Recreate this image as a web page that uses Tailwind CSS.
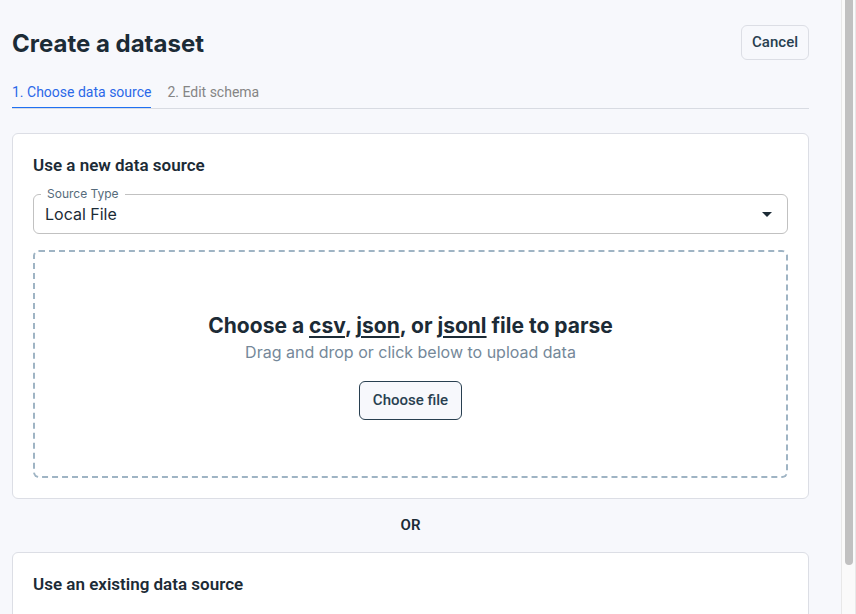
<!DOCTYPE html>
<html lang="en">
<head>
<meta charset="utf-8">
<meta name="viewport" content="width=device-width, initial-scale=1">
<title>Create a dataset</title>
<script src="https://cdn.jsdelivr.net/npm/@tailwindcss/browser@4"></script>
</head>
<body class="flex h-screen overflow-hidden bg-[#f7f8fc] font-[Roboto,'Liberation_Sans',sans-serif] text-[#1c2b36]">
  <main class="min-w-0 flex-1 overflow-hidden pt-[25px] pr-8 pl-3">
    <header class="flex items-start justify-between">
      <h1 class="pt-px font-[family-name:Inter,sans-serif] text-2xl leading-9 font-bold">Create a dataset</h1>
      <button type="button" class="h-[35px] rounded-md border border-[#dcdee5] px-2.5 pb-0.5 text-[15px] leading-5 font-medium text-[#283f50]">Cancel</button>
    </header>
    <nav class="mt-3.5 flex gap-4 border-b border-[#d8dbe2] text-sm leading-5">
      <a href="#source" aria-current="step" class="border-b border-[#1f70f2] pt-1.5 pb-[5px] text-[#2b68e8]">1. Choose data source</a>
      <a href="#schema" class="pt-1.5 pb-[5px] text-[#858585]">2. Edit schema</a>
    </nav>

    <section id="source" class="mt-6 rounded-md border border-[#dcdee5] bg-white p-5">
      <h2 class="text-[17px] leading-[22px] font-semibold">Use a new data source</h2>
      <div class="relative mt-[18px]">
        <label for="type" class="absolute -top-2 left-2 bg-white px-1.5 font-[family-name:Inter,sans-serif] text-xs leading-4 text-[#566b7b]">Source Type</label>
        <select id="type" class="block h-10 w-full appearance-none rounded-md border border-[#c1c1c1] bg-white px-[11px] font-[family-name:Inter,sans-serif] text-base">
          <option>Local File</option>
        </select>
        <svg class="pointer-events-none absolute top-2 right-[9px] size-6" viewBox="0 0 24 24" fill="#1c2b36" aria-hidden="true"><path d="M7 10l5 5 5-5z"/></svg>
      </div>
      <div class="mt-4 flex flex-col items-center rounded-md border-2 border-dashed border-[#9fb4c4] pt-[60px] pb-14">
        <h3 class="font-[family-name:Inter,sans-serif] text-[21px] leading-7 font-bold">Choose a <span class="underline decoration-2 underline-offset-3">csv</span>, <span class="underline decoration-2 underline-offset-3">json</span>, or <span class="underline decoration-2 underline-offset-3">jsonl</span> file to parse</h3>
        <p class="font-[family-name:Inter,sans-serif] text-base leading-6 text-[#758899]">Drag and drop or click below to upload data</p>
        <button type="button" class="mt-[17px] h-[39px] rounded-md border border-[#283f50] bg-[#f7f8fc] px-[13px] pb-0.5 text-[15px] leading-5 font-medium text-[#283f50]">Choose file</button>
      </div>
    </section>

    <p class="py-4 text-center text-[15px] leading-[21px] font-semibold">OR</p>

    <section class="rounded-md border border-[#dcdee5] bg-white p-5 pb-20">
      <h2 class="text-[17px] leading-[22px] font-semibold">Use an existing data source</h2>
    </section>
  </main>
  <div class="w-[15px] shrink-0 border-x border-[#e8e8e8] bg-[#fafafa] px-[3px]" aria-hidden="true">
    <div class="h-[92%] w-2 rounded-b-full bg-[#c1c1c1]"></div>
  </div>
</body>
</html>
